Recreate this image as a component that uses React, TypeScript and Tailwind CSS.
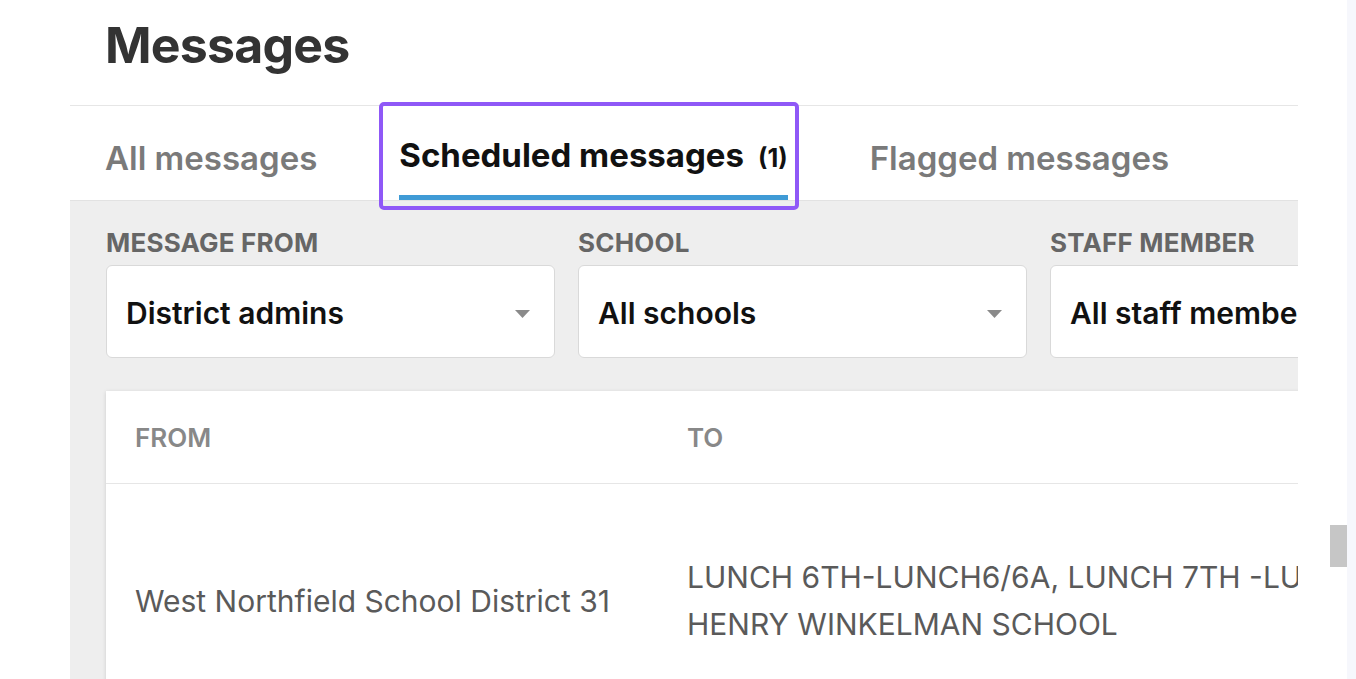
import React from 'react';

const filters = [
  { label: 'Message from', value: 'District admins' },
  { label: 'School', value: 'All schools' },
  { label: 'Staff member', value: 'All staff members' },
];

const Caret: React.FC = () => (
  <svg width="15" height="8" viewBox="0 0 15 8" className="shrink-0">
    <path d="M0 0h15L7.5 8z" fill="#8a8a8a" />
  </svg>
);

export default function App() {
  return (
    <div className="flex h-[679px] w-[1356px] overflow-hidden bg-white font-['Inter','Noto_Sans',sans-serif]">
      <div className="w-[70px] shrink-0" />

      <main className="flex w-[1228px] shrink-0 flex-col overflow-hidden">
        {/* Title */}
        <div className="h-[106px] shrink-0 border-b border-[#e6e6e6] pl-[35px] pt-[20px]">
          <h1 className="text-[50px] font-bold leading-none tracking-[-0.8px] text-[#333333]">Messages</h1>
        </div>

        {/* Tabs */}
        <div className="flex h-[94px] shrink-0 items-end gap-[82px] pl-[35px]">
          <button className="flex flex-col">
            <span className="text-[33px] font-semibold leading-[37px] text-[#7a7a7a]">All messages</span>
            <span className="mt-[18px] h-[5px]" />
          </button>
          <button className="relative flex flex-col">
            <span className="flex items-baseline text-[33px] font-bold leading-[37px] text-[#111111]">
              Scheduled messages
              <span className="ml-[14px] text-[25px]">(1)</span>
            </span>
            <span className="mt-[18px] h-[5px] bg-[#3f9bd6]" />
            <span className="pointer-events-none absolute -left-[20px] -right-[11px] -top-[35px] -bottom-[10px] z-10 rounded-[5px] border-4 border-[#8f58f7]" />
          </button>
          <button className="flex flex-col">
            <span className="text-[33px] font-semibold leading-[37px] text-[#7a7a7a]">Flagged messages</span>
            <span className="mt-[18px] h-[5px]" />
          </button>
        </div>

        {/* Filters + table */}
        <div className="flex-1 border-t border-[#e2e2e2] bg-[#eeeeee] pl-[36px] pt-[27px]">
          <div className="flex gap-[23px]">
            {filters.map((f) => (
              <div key={f.label} className="w-[449px] shrink-0">
                <div className="text-[26px] font-bold uppercase leading-[30px] tracking-[0.2px] text-[#666666]">{f.label}</div>
                <div className="mt-[7px] flex h-[93px] items-center justify-between rounded-[6px] border border-[#d9d9d9] bg-white pl-[19px] pr-[24px] pt-[4px]">
                  <span className="whitespace-nowrap text-[30px] font-semibold text-[#111111]">{f.value}</span>
                  <Caret />
                </div>
              </div>
            ))}
          </div>

          <div className="mt-[33px] w-[1400px] bg-white shadow-[0_1px_4px_rgba(0,0,0,0.14)]">
            <div className="flex h-[93px] items-center border-b border-[#e6e6e6] pl-[29px] text-[26px] font-semibold uppercase text-[#888888]">
              <div className="w-[552px] shrink-0">From</div>
              <div>To</div>
            </div>
            <div className="flex items-center pl-[29px] pt-[70px] pb-[70px] text-[30px] text-[#5a5a5a]">
              <div className="w-[552px] shrink-0">West Northfield School District 31</div>
              <div className="leading-[47px]">
                <div className="whitespace-nowrap">LUNCH 6TH-LUNCH6/6A, LUNCH 7TH -LUNCH 7/7A</div>
                <div>HENRY WINKELMAN SCHOOL</div>
              </div>
            </div>
          </div>
        </div>
      </main>

      {/* Scrollbar */}
      <div className="w-[49px] shrink-0 pl-[32px] pt-[525px]">
        <div className="h-[42px] w-[17px] bg-[#c6c6c6]" />
      </div>
      <div className="w-[9px] shrink-0 bg-[#f6f7fc]" />
    </div>
  );
}
